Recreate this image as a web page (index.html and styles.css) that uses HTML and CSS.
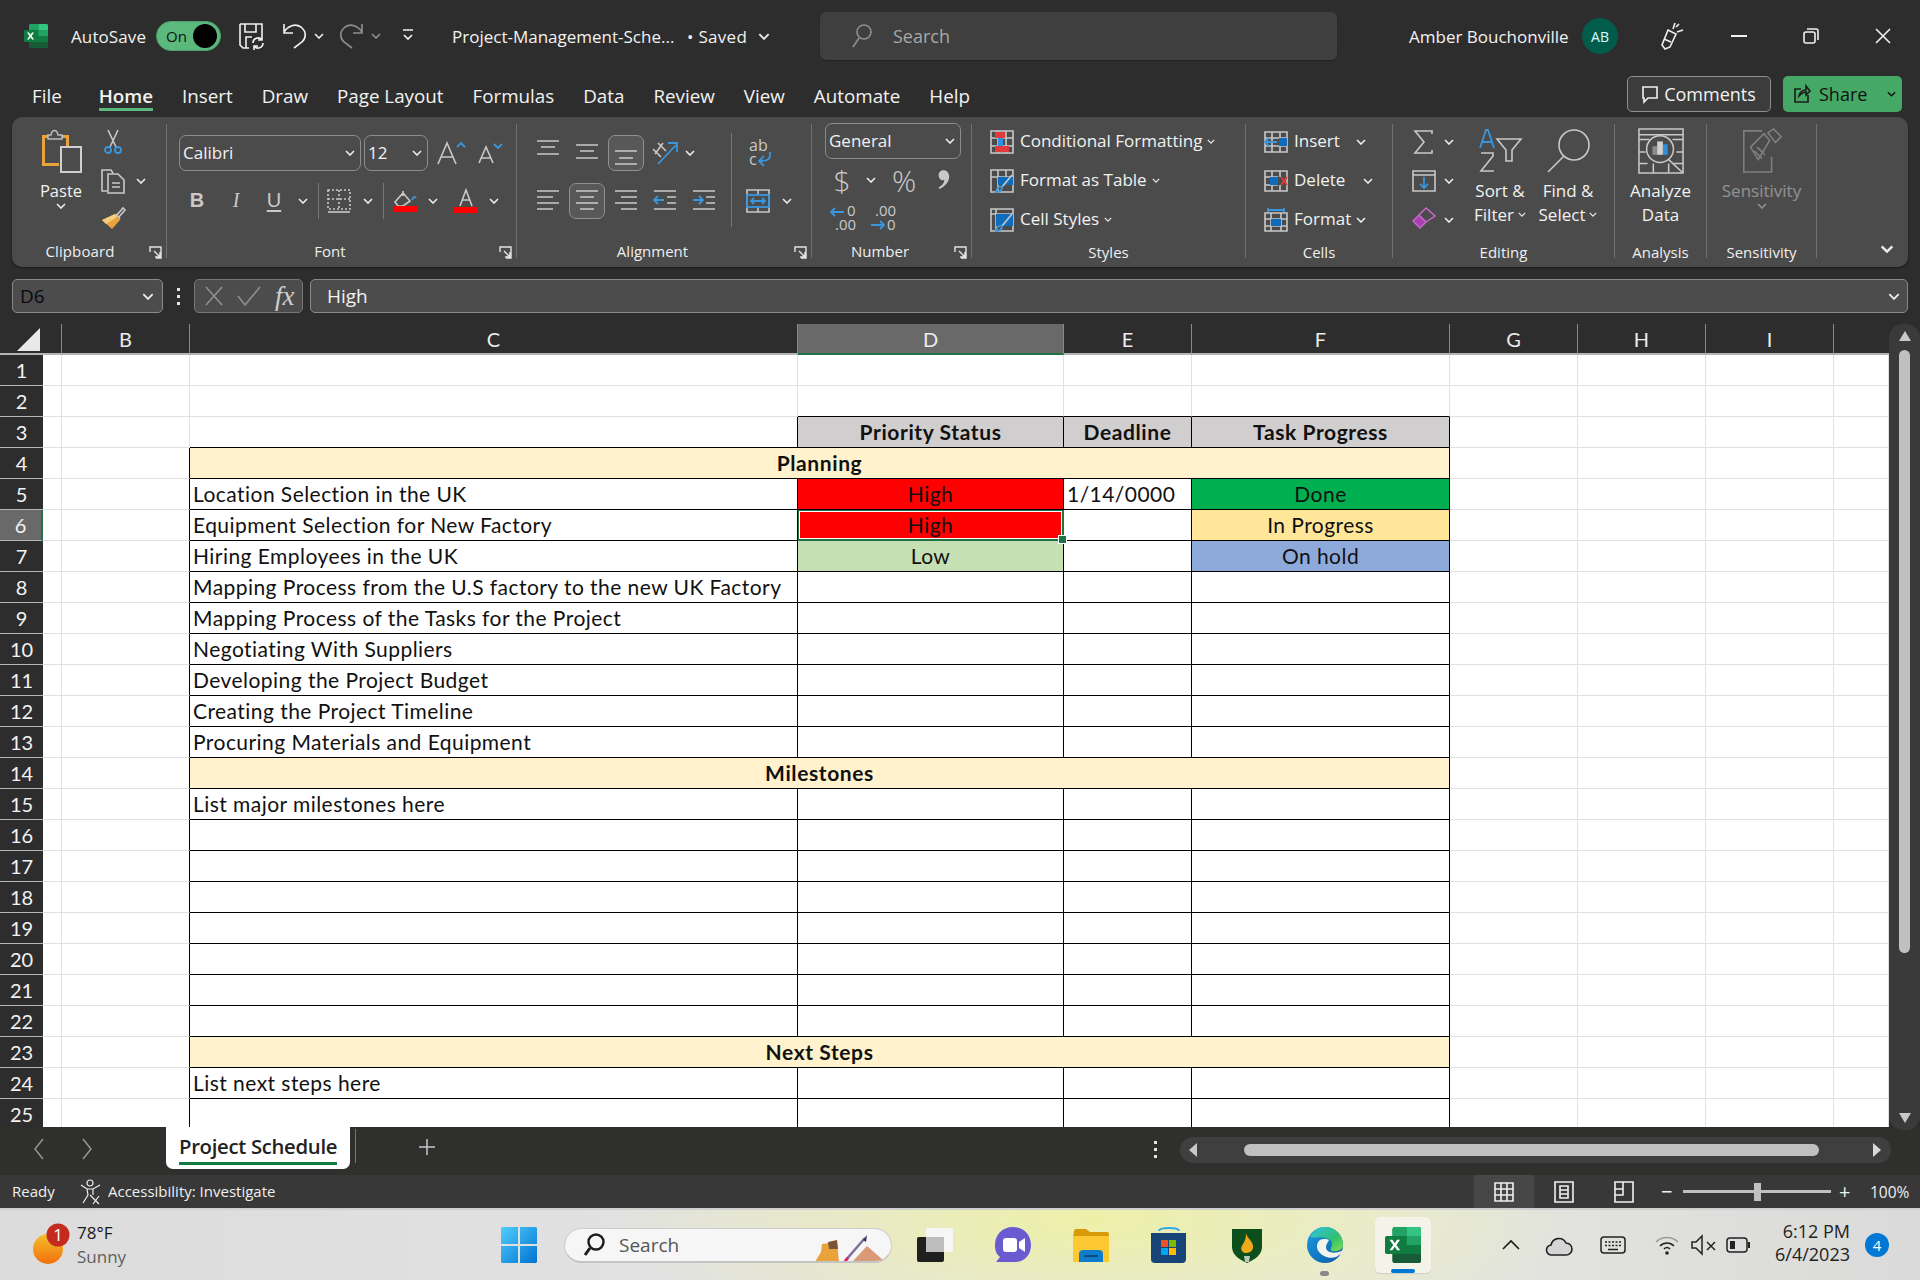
FILE: index.html
```html
<!DOCTYPE html>
<html lang="en">
<head>
<meta charset="utf-8">
<title>Project-Management-Schedule - Excel</title>
<link rel="stylesheet" href="styles.css">
</head>
<body>
<svg class="defs" width="0" height="0" aria-hidden="true">
  <defs>
    <symbol id="ch" viewBox="0 0 10 6"><path d="M1 1l4 4 4-4"/></symbol>
    <symbol id="xl" viewBox="0 0 24 24">
      <rect x="5" width="19" height="24" rx="1.5" fill="#107c41"/>
      <path d="M5 1.5A1.5 1.5 0 0 1 6.500 0H14.500V6H5Z" fill="#21a366"/>
      <path d="M14.500 0H22.500A1.500 1.500 0 0 1 24 1.500V6H14.500Z" fill="#33c481"/>
      <rect x="14.500" y="6" width="9.500" height="6" fill="#21a366"/>
      <path d="M5 18H24V22.500A1.500 1.500 0 0 1 22.500 24H6.500A1.500 1.500 0 0 1 5 22.500Z" fill="#185c37"/>
      <rect y="6" width="13" height="12" rx="1.200" fill="#107c41"/>
      <path d="M3 8.500h2l1.500 2.300L8 8.500h2l-2.400 3.500 2.500 3.500H8.100L6.500 13.200 4.900 15.500H3l2.500-3.500Z" fill="#fff"/>
    </symbol>
  </defs>
</svg>

<div class="app">
  <header class="titlebar">
    <div class="t-left">
      <svg class="xl-logo" width="24" height="24"><use href="#xl"/></svg>
      <span class="autosave">AutoSave</span>
      <span class="toggle"><span class="toggle-on">On</span><span class="toggle-dot"></span></span>
      <svg class="t-save ic-w" width="26" height="26" viewBox="0 0 26 26"><path d="M1 1H23V13M1 1V22L4 25H10M6 1V9H17V1M7 25V14H13"/><path d="M14 20a5 5 0 0 1 9-3M24 20a5 5 0 0 1-9 3M23 13v4h-4M15 27v-4h4"/></svg>
      <svg class="t-undo ic-w" width="24" height="26" viewBox="0 0 24 26"><path d="M1 1V10H10M1 9C5 3 12 0 18 4 24 9 23 15 19 19L11 25"/></svg>
      <svg class="chev t-uc" width="10" height="6"><use href="#ch"/></svg>
      <svg class="t-redo ic-g" width="24" height="26" viewBox="0 0 24 26"><path d="M23 1V10H14M23 9C19 3 12 0 6 4 0 9 1 15 5 19L13 25"/></svg>
      <svg class="chev dim t-rc" width="10" height="6"><use href="#ch"/></svg>
      <svg class="t-cust ic-w" width="12" height="14" viewBox="0 0 12 14"><path d="M1 1H11M2 6L6 10 10 6"/></svg>
      <span class="doc-name">Project-Management-Sche...</span>
      <span class="doc-state">• Saved</span>
      <svg class="chev t-dc" width="12" height="7"><use href="#ch"/></svg>
    </div>
    <div class="searchbox">
      <svg class="ic-g" width="22" height="26" viewBox="0 0 22 26"><circle cx="13" cy="9" r="7"/><path d="M8 15L2 24"/></svg>
      <span>Search</span>
    </div>
    <div class="t-right">
      <span class="user">Amber Bouchonville</span>
      <span class="avatar">AB</span>
      <svg class="t-pen ic-w" width="26" height="28" viewBox="0 0 26 28"><path d="M10 8L18 12 12 25 7 27 4 23ZM6 17L13 20M15 7l2-6M19 10l6-2M18 5l3-3"/></svg>
      <span class="t-min"></span>
      <svg class="t-rest ic-w" width="16" height="16" viewBox="0 0 16 16"><rect x="1" y="4" width="11" height="11" rx="2"/><path d="M4 1H13A2 2 0 0 1 15 3V12"/></svg>
      <svg class="t-close ic-w" width="16" height="16" viewBox="0 0 16 16"><path d="M1 1L15 15M15 1L1 15"/></svg>
    </div>
  </header>

  <nav class="tabrow">
    <div class="tabs">
      <span>File</span><span class="active">Home</span><span>Insert</span><span>Draw</span><span>Page Layout</span><span>Formulas</span><span>Data</span><span>Review</span><span>View</span><span>Automate</span><span>Help</span>
    </div>
    <div class="tab-actions">
      <span class="btn-comments"><svg class="ic-w" width="16" height="17" viewBox="0 0 16 17"><path d="M1 1H15V12H6L2 16V12H1Z"/></svg>Comments</span>
      <span class="btn-share"><svg class="ic-d" width="17" height="18" viewBox="0 0 17 18"><path d="M7 4H1V17H14V10M5 11C6 7 9 5 12 5V1L16 6 12 10V7C9 7 7 9 5 11Z"/></svg>Share<svg class="chev dark sh-c" width="9" height="6"><use href="#ch"/></svg></span>
    </div>
  </nav>

  <section class="ribbon">
    <!-- Clipboard -->
    <div class="g g-clip">
      <div class="body clip">
        <div class="big w84">
          <svg class="bigic" width="44" height="46" viewBox="0 0 44 46"><path d="M17 7H3V38H20V35H6V10H17Z" fill="#e8a33d"/><path d="M23 7H30V18H27V10H23Z" fill="#e8a33d"/><rect x="22" y="19" width="20" height="25" fill="none" stroke="#cfcfcf" stroke-width="2"/><path d="M9 7H12C13 1 18 1 19 7H23V11H9Z" fill="#4c4c4c" stroke="#bdbdbd" stroke-width="1.500"/></svg>
          <span class="bt">Paste</span>
          <svg class="chev" width="10" height="6"><use href="#ch"/></svg>
        </div>
        <div class="col39">
          <div class="r39"><span class="cell w20"><svg width="18" height="26" viewBox="0 0 18 26"><path class="s" d="M4 1L12 18M14 1L6 18"/><circle class="b" cx="4" cy="21" r="3"/><circle class="b" cx="14" cy="21" r="3"/></svg></span></div>
          <div class="r39"><span class="cell w20"><svg width="26" height="26" viewBox="0 0 26 26"><path class="s" d="M7 23H2V2H11L13 5M8 6H18L24 12V25H8ZM12 15H20M12 19H20"/></svg></span><span class="cell w36"><svg class="chev" width="10" height="6"><use href="#ch"/></svg></span></div>
          <div class="r39"><span class="cell w20"><svg width="26" height="24" viewBox="0 0 26 24"><path class="s" d="M16 10L23 2 25 4 18 12M16 8L20 13"/><path d="M2 14L15 8 20 14 12 23Z" fill="#e8a33d"/><path d="M2 14L15 8 17 11 6 18Z" fill="#f4ce7e"/></svg></span></div>
        </div>
      </div>
      <div class="lbl"><span>Clipboard</span><i class="launch"><svg width="13" height="13" viewBox="0 0 13 13"><path d="M1 6V1H12V12H7M5 5L11 11M11 6V11H6"/></svg></i></div>
    </div>

    <!-- Font -->
    <div class="g g-font">
      <div class="body stack">
        <div class="row36">
          <span class="sel-box w182">Calibri<svg class="chev" width="10" height="6"><use href="#ch"/></svg></span>
          <span class="sel-box w64 ml3">12<svg class="chev" width="10" height="6"><use href="#ch"/></svg></span>
          <span class="cell w36 ml5"><svg width="30" height="24" viewBox="0 0 30 24"><path class="s" d="M2 23L11 2 20 23M5 16H17"/><path class="b" d="M21 6L25 2 29 6"/></svg></span>
          <span class="cell w36 ml3"><svg width="26" height="22" viewBox="0 0 26 22"><path class="s" d="M2 21L9 5 16 21M4 16H14"/><path class="b" d="M17 2L21 6 25 2"/></svg></span>
        </div>
        <div class="row36">
          <span class="cell w36 fmt bold">B</span>
          <span class="cell w42 fmt ital">I</span>
          <span class="cell w34 fmt under">U</span>
          <span class="cell w24"><svg class="chev" width="10" height="6"><use href="#ch"/></svg></span>
          <span class="vsep w6"></span>
          <span class="cell w36"><svg width="24" height="24" viewBox="0 0 24 24"><path class="s dot" d="M1 1H23V20H1ZM12 1V20M1 10H23"/><path class="s" d="M1 23H23"/></svg></span>
          <span class="cell w22"><svg class="chev" width="10" height="6"><use href="#ch"/></svg></span>
          <span class="vsep w8"></span>
          <span class="cell w36 colcell"><svg width="24" height="22" viewBox="0 0 24 22"><path class="s" d="M2 12L10 3 17 11 10 16H5ZM10 1V6"/><path class="b" d="M19 10C20 7 22 6 23 8"/><rect x="0" y="16" width="24" height="6" fill="#f00"/></svg></span>
          <span class="cell w20"><svg class="chev" width="10" height="6"><use href="#ch"/></svg></span>
          <span class="cell w36 ml5 colcell"><svg width="24" height="24" viewBox="0 0 24 24"><path class="s" d="M6 17L12 1 18 17M8 11H16"/><rect x="0" y="18" width="24" height="6" fill="#f00"/></svg></span>
          <span class="cell w20"><svg class="chev" width="10" height="6"><use href="#ch"/></svg></span>
        </div>
      </div>
      <div class="lbl"><span>Font</span><i class="launch"><svg width="13" height="13" viewBox="0 0 13 13"><path d="M1 6V1H12V12H7M5 5L11 11M11 6V11H6"/></svg></i></div>
    </div>

    <!-- Alignment -->
    <div class="g g-align">
      <div class="body alignb">
        <div class="stack w203">
          <div class="row36">
            <span class="cell w39"><svg width="24" height="36" viewBox="0 0 24 36"><path class="s" d="M1 6H23M5 12H19M1 19H23"/></svg></span>
            <span class="cell w39"><svg width="24" height="36" viewBox="0 0 24 36"><path class="s" d="M1 10H23M5 16H19M1 23H23"/></svg></span>
            <span class="cell w39"><span class="on"><svg width="24" height="34" viewBox="0 0 24 34"><path class="s" d="M1 15H23M5 22H19M1 28H23"/></svg></span></span>
            <span class="cell w39"><svg width="26" height="26" viewBox="0 0 26 26"><path class="b" d="M6 24L24 5M16 3H25V12"/><path class="s" d="M3 14L11 3M6 3L14 11M1 9L9 17"/></svg></span>
            <span class="cell w12"><svg class="chev" width="10" height="6"><use href="#ch"/></svg></span>
          </div>
          <div class="row36">
            <span class="cell w39"><svg width="24" height="36" viewBox="0 0 24 36"><path class="s" d="M1 8H23M1 14H17M1 20H23M1 26H17"/></svg></span>
            <span class="cell w39"><span class="on"><svg width="24" height="34" viewBox="0 0 24 34"><path class="s" d="M1 7H23M5 13H19M1 19H23M5 25H19"/></svg></span></span>
            <span class="cell w39"><svg width="24" height="36" viewBox="0 0 24 36"><path class="s" d="M1 8H23M7 14H23M1 20H23M7 26H23"/></svg></span>
            <span class="cell w39"><svg width="24" height="36" viewBox="0 0 24 36"><path class="s" d="M1 8H23M14 14H23M14 20H23M1 26H23"/><path class="b" d="M11 17H1M5 13L1 17 5 21"/></svg></span>
            <span class="cell w39"><svg width="24" height="36" viewBox="0 0 24 36"><path class="s" d="M1 8H23M14 14H23M14 20H23M1 26H23"/><path class="b" d="M1 17H11M7 13L11 17 7 21"/></svg></span>
          </div>
        </div>
        <span class="vsep tall"></span>
        <div class="stack">
          <div class="row36"><span class="cell w58"><svg width="24" height="30" viewBox="0 0 24 30"><text class="glyph lg" x="0" y="13">ab</text><text class="glyph lg" x="0" y="27">c</text><path class="b" d="M21 14V18C21 22 17 23 11 23M15 18L10 23 15 28"/></svg></span></div>
          <div class="row36"><span class="cell w52"><svg width="24" height="24" viewBox="0 0 24 24"><path class="s" d="M1 1H23V23H1ZM12 1V5M12 19V23"/><rect class="b" x="1" y="6" width="22" height="12"/><path class="b" d="M5 12H19M8 9L5 12 8 15M16 9L19 12 16 15"/></svg></span><span class="cell w6"><svg class="chev" width="10" height="6"><use href="#ch"/></svg></span></div>
        </div>
      </div>
      <div class="lbl"><span>Alignment</span><i class="launch"><svg width="13" height="13" viewBox="0 0 13 13"><path d="M1 6V1H12V12H7M5 5L11 11M11 6V11H6"/></svg></i></div>
    </div>

    <!-- Number -->
    <div class="g g-num">
      <div class="body num">
        <span class="sel-box w136">General<svg class="chev" width="10" height="6"><use href="#ch"/></svg></span>
        <div class="row36 mt3">
          <span class="cell w34 sym">$</span>
          <span class="cell w24"><svg class="chev" width="10" height="6"><use href="#ch"/></svg></span>
          <span class="cell w42 sym">%</span>
          <span class="cell w36"><svg width="13" height="22" viewBox="0 0 16 26"><path d="M8 1C12 1 15 4 15 9 15 15 10 21 3 24L2 22C6 20 9 17 9 13 5 14 2 11 2 7 2 3 5 1 8 1Z" fill="#c9c9c9"/></svg></span>
        </div>
        <div class="row36 mt2">
          <span class="cell w36"><svg width="28" height="28" viewBox="0 0 28 28"><path class="b" d="M15 8H2M6 4L2 8 6 12"/><text class="glyph" x="18" y="12">0</text><text class="glyph" x="6" y="26">.00</text></svg></span>
          <span class="cell w44"><svg width="28" height="28" viewBox="0 0 28 28"><text class="glyph" x="6" y="12">.00</text><path class="b" d="M2 21H15M11 17L15 21 11 25"/><text class="glyph" x="18" y="26">0</text></svg></span>
        </div>
      </div>
      <div class="lbl"><span>Number</span><i class="launch"><svg width="13" height="13" viewBox="0 0 13 13"><path d="M1 6V1H12V12H7M5 5L11 11M11 6V11H6"/></svg></i></div>
    </div>

    <!-- Styles -->
    <div class="g g-styles">
      <div class="body listb">
        <div class="r39 txt"><svg width="24" height="24" viewBox="0 0 24 24"><path class="s" d="M1 1H23V23H1ZM1 8H23M1 16H23M8 1V23M16 1V23"/><path d="M5 2H15V8H5ZM5 16H19V22H5Z" fill="#e03a3a"/><rect x="8" y="8" width="5" height="8" fill="#2f8fe0"/></svg><span>Conditional Formatting</span><svg class="chev small" width="8" height="5"><use href="#ch"/></svg></div>
        <div class="r39 txt"><svg width="24" height="24" viewBox="0 0 24 24"><path class="s" d="M1 1H23V23H1ZM1 8H23M8 1V23M16 1V8"/><rect x="8" y="8" width="15" height="8" fill="#0f6cbd"/><path class="s" d="M22 6L12 18"/><path class="b" d="M6 23C7 18 10 17 12 18 12 21 10 23 6 23Z"/></svg><span>Format as Table</span><svg class="chev small" width="8" height="5"><use href="#ch"/></svg></div>
        <div class="r39 txt"><svg width="24" height="24" viewBox="0 0 24 24"><path class="s" d="M1 1H23V23H1ZM1 6H23M6 1V23"/><rect x="6" y="6" width="17" height="12" fill="#0f6cbd"/><path class="s" d="M22 6L12 18"/><path class="b" d="M6 23C7 18 10 17 12 18 12 21 10 23 6 23Z"/></svg><span>Cell Styles</span><svg class="chev small" width="8" height="5"><use href="#ch"/></svg></div>
      </div>
      <div class="lbl plain"><span>Styles</span></div>
    </div>

    <!-- Cells -->
    <div class="g g-cells">
      <div class="body listb">
        <div class="r39 txt"><svg width="24" height="22" viewBox="0 0 24 22"><path class="s" d="M1 1H23V21H1ZM1 7H23M1 15H23M8 1V21M16 1V21"/><rect x="15" y="7" width="8" height="8" fill="#0f6cbd"/><path class="b" d="M13 11H1M5 7L1 11 5 15"/></svg><span class="cw">Insert</span><svg class="chev" width="10" height="6"><use href="#ch"/></svg></div>
        <div class="r39 txt"><svg width="24" height="22" viewBox="0 0 24 22"><path class="s" d="M1 1H23V21H1ZM1 7H14M1 15H14M8 1V21M16 1V7M16 15V21"/><rect x="6" y="7" width="8" height="8" fill="#0f6cbd"/><path class="rd" d="M17 7L23 15M23 7L17 15"/></svg><span class="cw cw2">Delete</span><svg class="chev" width="10" height="6"><use href="#ch"/></svg></div>
        <div class="r39 txt"><svg width="24" height="24" viewBox="0 0 24 24"><path class="s" d="M1 5H23V23H1ZM1 11H23M1 18H23M7 5V23M17 5V23"/><rect x="7" y="11" width="10" height="7" fill="#0f6cbd"/><path class="b" d="M4 2H20M4 0V4M20 0V4"/></svg><span class="cw">Format</span><svg class="chev" width="10" height="6"><use href="#ch"/></svg></div>
      </div>
      <div class="lbl plain"><span>Cells</span></div>
    </div>

    <!-- Editing -->
    <div class="g g-edit">
      <div class="body editb">
        <div class="col39">
          <div class="r39"><span class="cell w20"><svg width="20" height="24" viewBox="0 0 20 24"><path class="s" d="M18 4V1H1L10 12 1 23H18V20"/></svg></span><span class="cell w30"><svg class="chev" width="10" height="6"><use href="#ch"/></svg></span></div>
          <div class="r39"><span class="cell w20"><svg width="24" height="22" viewBox="0 0 24 22"><path class="s" d="M1 1H23V21H1ZM1 5H23"/><path class="b" d="M12 7V18M8 14L12 18 16 14"/></svg></span><span class="cell w30"><svg class="chev" width="10" height="6"><use href="#ch"/></svg></span></div>
          <div class="r39"><span class="cell w20"><svg width="24" height="24" viewBox="0 0 24 24"><path d="M1 15L8 22 14 16 7 9Z" fill="#a83fb0" stroke="#c768cc" stroke-width="1.500"/><path d="M7 9L14 2 23 10 14 16" fill="none" stroke="#c768cc" stroke-width="1.500"/></svg></span><span class="cell w30"><svg class="chev" width="10" height="6"><use href="#ch"/></svg></span></div>
        </div>
        <div class="big w68">
          <svg class="bigic" width="44" height="46" viewBox="0 0 44 46"><path class="b" d="M2 20L8 2H10L16 20M4 14H14"/><path class="s" d="M3 25H15V28L3 43H16M19 11H43L34 22V33H28V22Z"/></svg>
          <span class="bt">Sort &amp;</span>
          <span class="bt">Filter<svg class="chev small ml4" width="8" height="5"><use href="#ch"/></svg></span>
        </div>
        <div class="big w68">
          <svg class="bigic" width="44" height="46" viewBox="0 0 44 46"><circle class="s" cx="28" cy="17" r="15"/><path class="s" d="M18 28L2 44"/></svg>
          <span class="bt">Find &amp;</span>
          <span class="bt">Select<svg class="chev small ml4" width="8" height="5"><use href="#ch"/></svg></span>
        </div>
      </div>
      <div class="lbl plain"><span>Editing</span></div>
    </div>

    <!-- Analysis -->
    <div class="g g-ana">
      <div class="body editb">
        <div class="big wfull">
          <svg class="bigic" width="48" height="48" viewBox="0 0 48 48"><path class="s" d="M1 1H47V47H1ZM1 7H47M1 12H12M36 12H47M1 25H8M40 25H47M1 37H10M37 37H47M16 37V47M32 37V47"/><circle class="s" cx="23" cy="22" r="14"/><path class="s" d="M32 33L47 47"/><rect x="15" y="19" width="5" height="9" fill="#8a8a8a"/><rect x="20" y="14" width="6" height="14" fill="#d0d0d0"/><rect x="26" y="17" width="5" height="11" fill="#2f8fe0"/></svg>
          <span class="bt">Analyze</span>
          <span class="bt">Data</span>
        </div>
      </div>
      <div class="lbl plain"><span>Analysis</span></div>
    </div>

    <!-- Sensitivity -->
    <div class="g g-sens">
      <div class="body editb">
        <div class="big wfull disabled">
          <svg class="bigic" width="44" height="48" viewBox="0 0 44 48"><path class="s" d="M22 3H3V46H32V30"/><path class="s" d="M10 20L24 6 30 13 18 33Z M28 5L34 1 42 9 36 15Z M14 24L22 32M17 20L25 28"/></svg>
          <span class="bt">Sensitivity</span>
          <svg class="chev" width="10" height="6"><use href="#ch"/></svg>
        </div>
      </div>
      <div class="lbl plain"><span>Sensitivity</span></div>
    </div>

    <div class="collapse"><svg class="chev big-ch" width="14" height="8"><use href="#ch"/></svg></div>
  </section>

  <section class="fbar">
    <div class="namebox"><span>D6</span><svg class="chev" width="12" height="7"><use href="#ch"/></svg></div>
    <span class="fdots"><i></i><i></i><i></i></span>
    <div class="fxbox">
      <svg class="ic-g" width="18" height="20" viewBox="0 0 18 20"><path d="M1 1L17 19M17 1L1 19"/></svg>
      <svg class="ic-g" width="24" height="20" viewBox="0 0 24 20"><path d="M1 10L8 19 23 1"/></svg>
      <span class="fx">fx</span>
    </div>
    <div class="fbox"><span>High</span><svg class="chev" width="12" height="7"><use href="#ch"/></svg></div>
  </section>

  <section class="sheet">
    <div class="gridwrap">
      <table class="grid">
        <colgroup><col class="c-h"><col class="c-a"><col class="c-b"><col class="c-c"><col class="c-d"><col class="c-e"><col class="c-f"><col class="c-g"><col class="c-g"><col class="c-g"><col></colgroup>
        <thead>
          <tr><th class="corner"><svg width="23" height="23" viewBox="0 0 23 23"><path d="M0 23L23 0V23Z" fill="#e9e9e9"/></svg></th><th></th><th>B</th><th>C</th><th class="hsel">D</th><th>E</th><th>F</th><th>G</th><th>H</th><th>I</th><th></th></tr>
        </thead>
        <tbody>
          <tr><th>1</th><td></td><td></td><td></td><td></td><td></td><td></td><td></td><td></td><td></td><td></td></tr>
          <tr><th>2</th><td></td><td></td><td></td><td class="bb"></td><td class="bb"></td><td class="bb"></td><td></td><td></td><td></td><td></td></tr>
          <tr><th>3</th><td></td><td></td><td class="bb br"></td><td class="x gr hd">Priority Status</td><td class="x gr hd">Deadline</td><td class="x gr hd">Task Progress</td><td></td><td></td><td></td><td></td></tr>
          <tr><th>4</th><td></td><td class="br"></td><td class="x yl hd" colspan="4">Planning</td><td></td><td></td><td></td><td></td></tr>
          <tr><th>5</th><td></td><td class="br"></td><td class="x">Location Selection in the UK</td><td class="x red ctr">High</td><td class="x">1/14/0000</td><td class="x dn ctr">Done</td><td></td><td></td><td></td><td></td></tr>
          <tr><th class="rsel">6</th><td></td><td class="br"></td><td class="x">Equipment Selection for New Factory</td><td class="x red ctr cur">High</td><td class="x"></td><td class="x ip ctr">In Progress</td><td></td><td></td><td></td><td></td></tr>
          <tr><th>7</th><td></td><td class="br"></td><td class="x">Hiring Employees in the UK</td><td class="x lo ctr">Low</td><td class="x"></td><td class="x oh ctr">On hold</td><td></td><td></td><td></td><td></td></tr>
          <tr><th>8</th><td></td><td class="br"></td><td class="x">Mapping Process from the U.S factory to the new UK Factory</td><td class="x"></td><td class="x"></td><td class="x"></td><td></td><td></td><td></td><td></td></tr>
          <tr><th>9</th><td></td><td class="br"></td><td class="x">Mapping Process of the Tasks for the Project</td><td class="x"></td><td class="x"></td><td class="x"></td><td></td><td></td><td></td><td></td></tr>
          <tr><th>10</th><td></td><td class="br"></td><td class="x">Negotiating With Suppliers</td><td class="x"></td><td class="x"></td><td class="x"></td><td></td><td></td><td></td><td></td></tr>
          <tr><th>11</th><td></td><td class="br"></td><td class="x">Developing the Project Budget</td><td class="x"></td><td class="x"></td><td class="x"></td><td></td><td></td><td></td><td></td></tr>
          <tr><th>12</th><td></td><td class="br"></td><td class="x">Creating the Project Timeline</td><td class="x"></td><td class="x"></td><td class="x"></td><td></td><td></td><td></td><td></td></tr>
          <tr><th>13</th><td></td><td class="br"></td><td class="x">Procuring Materials and Equipment</td><td class="x"></td><td class="x"></td><td class="x"></td><td></td><td></td><td></td><td></td></tr>
          <tr><th>14</th><td></td><td class="br"></td><td class="x yl hd" colspan="4">Milestones</td><td></td><td></td><td></td><td></td></tr>
          <tr><th>15</th><td></td><td class="br"></td><td class="x">List major milestones here</td><td class="x"></td><td class="x"></td><td class="x"></td><td></td><td></td><td></td><td></td></tr>
          <tr><th>16</th><td></td><td class="br"></td><td class="x"></td><td class="x"></td><td class="x"></td><td class="x"></td><td></td><td></td><td></td><td></td></tr>
          <tr><th>17</th><td></td><td class="br"></td><td class="x"></td><td class="x"></td><td class="x"></td><td class="x"></td><td></td><td></td><td></td><td></td></tr>
          <tr><th>18</th><td></td><td class="br"></td><td class="x"></td><td class="x"></td><td class="x"></td><td class="x"></td><td></td><td></td><td></td><td></td></tr>
          <tr><th>19</th><td></td><td class="br"></td><td class="x"></td><td class="x"></td><td class="x"></td><td class="x"></td><td></td><td></td><td></td><td></td></tr>
          <tr><th>20</th><td></td><td class="br"></td><td class="x"></td><td class="x"></td><td class="x"></td><td class="x"></td><td></td><td></td><td></td><td></td></tr>
          <tr><th>21</th><td></td><td class="br"></td><td class="x"></td><td class="x"></td><td class="x"></td><td class="x"></td><td></td><td></td><td></td><td></td></tr>
          <tr><th>22</th><td></td><td class="br"></td><td class="x"></td><td class="x"></td><td class="x"></td><td class="x"></td><td></td><td></td><td></td><td></td></tr>
          <tr><th>23</th><td></td><td class="br"></td><td class="x yl hd" colspan="4">Next Steps</td><td></td><td></td><td></td><td></td></tr>
          <tr><th>24</th><td></td><td class="br"></td><td class="x">List next steps here</td><td class="x"></td><td class="x"></td><td class="x"></td><td></td><td></td><td></td><td></td></tr>
          <tr><th>25</th><td></td><td class="br"></td><td class="x"></td><td class="x"></td><td class="x"></td><td class="x"></td><td></td><td></td><td></td><td></td></tr>
        </tbody>
      </table>
    </div>
    <div class="vscroll">
      <svg width="14" height="12" viewBox="0 0 14 12"><path d="M7 1L13 11H1Z" fill="#c8c8c8"/></svg>
      <span class="vthumb"></span>
      <svg width="14" height="12" viewBox="0 0 14 12"><path d="M7 11L13 1H1Z" fill="#c8c8c8"/></svg>
    </div>
  </section>

  <section class="sheetbar">
    <svg class="nav-l" width="10" height="22" viewBox="0 0 10 22"><path d="M9 1L1 11 9 21"/></svg>
    <svg class="nav-r" width="10" height="22" viewBox="0 0 10 22"><path d="M1 1L9 11 1 21"/></svg>
    <div class="sheettab"><span>Project Schedule</span></div>
    <span class="tabsep"></span>
    <svg class="plus" width="18" height="18" viewBox="0 0 18 18"><path d="M9 1V17M1 9H17"/></svg>
    <span class="sdots"><i></i><i></i><i></i></span>
    <div class="hscroll">
      <svg width="10" height="14" viewBox="0 0 10 14"><path d="M9 0V14L1 7Z" fill="#c8c8c8"/></svg>
      <span class="hthumb"></span>
      <svg width="10" height="14" viewBox="0 0 10 14"><path d="M1 0V14L9 7Z" fill="#d8d8d8"/></svg>
    </div>
  </section>

  <footer class="status">
    <span class="ready">Ready</span>
    <svg class="acc ic-w thin" width="22" height="26" viewBox="0 0 22 26"><circle cx="10" cy="4" r="3"/><path d="M1 6L7 10H13L20 6M7 10L8 16M13 10L13 16M8 16L3 24M10 16L19 25M13 25L19 17"/></svg>
    <span class="acc-t">Accessibility: Investigate</span>
    <div class="views">
      <span class="v-cell v-on"><svg class="ic-w" width="20" height="20" viewBox="0 0 20 20"><path d="M1 1H19V19H1ZM1 7H19M1 13H19M7 1V19M13 1V19"/></svg></span>
      <span class="v-cell"><svg class="ic-w" width="20" height="22" viewBox="0 0 20 22"><path d="M1 1H19V21H1ZM6 5H14V17H6ZM6 9H14M6 13H14"/></svg></span>
      <span class="v-cell"><svg class="ic-w" width="20" height="22" viewBox="0 0 20 22"><path d="M1 1H19V21H1ZM1 14H9V1M9 8H1"/></svg></span>
    </div>
    <span class="zm">−</span>
    <span class="slider"><i></i></span>
    <span class="zp">+</span>
    <span class="zoom">100%</span>
  </footer>

  <div class="taskbar">
    <div class="weather">
      <span class="sun"><svg width="38" height="44" viewBox="0 0 38 44"><defs><linearGradient id="sg" x1="0" y1="0" x2="0" y2="1"><stop offset="0" stop-color="#f4c02a"/><stop offset="1" stop-color="#f26f0c"/></linearGradient></defs><circle cx="15" cy="26" r="15" fill="url(#sg)"/><circle cx="25" cy="12" r="11.500" fill="#c42b1c"/><text class="sun-n" x="25" y="18" text-anchor="middle">1</text></svg></span>
      <div class="w-text"><span class="w-t">78°F</span><span class="w-s">Sunny</span></div>
    </div>
    <svg class="start" width="36" height="36" viewBox="0 0 36 36"><defs><linearGradient id="st" x1="0" y1="0" x2="1" y2="1"><stop offset="0" stop-color="#52cdfc"/><stop offset="1" stop-color="#0072d0"/></linearGradient></defs><path d="M1 0H17V17H0V1ZM19 0H35L36 1V17H19ZM0 19H17V36H1L0 35ZM19 19H36V35L35 36H19Z" fill="url(#st)"/></svg>
    <div class="pill">
      <svg class="mag" width="22" height="24" viewBox="0 0 22 24"><circle cx="13" cy="9" r="7.500" fill="none" stroke="#1c1c1c" stroke-width="2.400"/><path d="M7 15L2 22" stroke="#1c1c1c" stroke-width="3"/></svg>
      <span>Search</span>
      <svg class="decor" width="72" height="28" viewBox="0 0 72 28"><path d="M2 28L8 18 9 10 24 8 26 28Z" fill="#e8a33d"/><path d="M15 8L24 6 25 15 16 15Z" fill="#7a5538"/><path d="M32 27L52 4" stroke="#7e6f9e" stroke-width="2.500"/><path d="M30 28L34 23 36 25 33 28Z" fill="#e8175d"/><path d="M50 6L54 1 53 8Z" fill="#3b2f5c"/><path d="M40 27L54 12 70 26V28H40Z" fill="#d99a75"/></svg>
    </div>
    <div class="apps">
      <span class="app-c"><svg width="36" height="34" viewBox="0 0 36 34"><rect x="0" y="9" width="27" height="25" rx="2" fill="#1f1f1f"/><rect x="9" y="0" width="27" height="24" rx="2" fill="#f6f6f6"/><rect x="9" y="9" width="18" height="15" fill="#bdbdbd"/></svg></span>
      <span class="app-c"><svg width="38" height="36" viewBox="0 0 38 36"><path d="M19 0C30 0 37 8 37 18S30 36 19 35H2L6 30C2 27 1 23 1 18 1 8 8 0 19 0Z" fill="#6a5bd0"/><rect x="9" y="11" width="14" height="14" rx="3" fill="#fff"/><path d="M25 15L31 11V25L25 21Z" fill="#fff"/></svg></span>
      <span class="app-c"><svg width="36" height="34" viewBox="0 0 36 34"><path d="M1 3A2 2 0 0 1 3 1H13L17 4H34A2 2 0 0 1 36 6V10H0Z" fill="#d99a0a"/><path d="M0 8H36V34H0Z" fill="#fdc832"/><path d="M6 34V26A4 4 0 0 1 10 22H26A4 4 0 0 1 30 26V34Z" fill="#0f7ccc"/><rect x="11" y="27" width="14" height="2" fill="#094f85"/></svg></span>
      <span class="app-c"><svg width="36" height="36" viewBox="0 0 36 36"><path d="M8 4C8 0 28 0 28 4" fill="none" stroke="#2fa9e8" stroke-width="2"/><path d="M0 6H35V32A4 4 0 0 1 31 36H4A4 4 0 0 1 0 32Z" fill="#164477"/><rect x="10" y="13" width="7" height="7" fill="#f25022"/><rect x="18" y="13" width="7" height="7" fill="#7fba00"/><rect x="10" y="21" width="7" height="7" fill="#00a4ef"/><rect x="18" y="21" width="7" height="7" fill="#ffb900"/></svg></span>
      <span class="app-c"><svg width="30" height="36" viewBox="0 0 30 36"><path d="M0 2H30V20C30 28 22 33 15 36 8 33 0 28 0 20Z" fill="#0c4e1c"/><path d="M14 6C15 12 22 14 21 21 20 25 17 26 13 26 9 25 8 21 11 17 13 14 14 11 14 6Z" fill="#f0a91a"/><path d="M12 29H18L17 35H13Z" fill="#b8c9b8"/></svg></span>
      <span class="app-c edgeapp"><svg width="36" height="36" viewBox="0 0 36 36"><defs><linearGradient id="eg" x1="0" y1="0" x2="1" y2="1"><stop offset="0" stop-color="#34c1e8"/><stop offset=".6" stop-color="#2fc26f"/><stop offset="1" stop-color="#84e04a"/></linearGradient><linearGradient id="eb" x1="0" y1="0" x2="1" y2="1"><stop offset="0" stop-color="#1b9de2"/><stop offset="1" stop-color="#0c59a4"/></linearGradient></defs><circle cx="18" cy="18" r="18" fill="url(#eb)"/><path d="M3 10C7 2 14 0 18 0 28 0 36 8 36 18 36 23 30 25 25 24 21 23 29 16 22 12 15 8 8 12 3 10Z" fill="url(#eg)"/><path d="M17 12C10 12 8 20 12 25 16 30 24 32 29 30 33 28 36 25 36 23 30 27 19 27 19 20 19 17 21 15 22 13 21 12 19 12 17 12Z" fill="#f2f3ee"/></svg></span>
      <span class="app-c xlapp"><svg width="36" height="36"><use href="#xl"/></svg></span>
    </div>
    <div class="tray">
      <svg class="tr-caret" width="18" height="10" viewBox="0 0 18 10"><path d="M1 9L9 1 17 9"/></svg>
      <svg class="tr-cloud" width="26" height="22" viewBox="0 0 26 22"><path d="M6 21A5 5 0 0 1 5 11 8 8 0 0 1 20 9 6 6 0 0 1 20 21Z" fill="#d5d5d5" stroke="#222" stroke-width="1.600"/></svg>
      <svg class="tr-kb" width="26" height="18" viewBox="0 0 26 18"><rect x="1" y="1" width="24" height="16" rx="3" fill="none" stroke="#222" stroke-width="1.500"/><path d="M5 6H21M5 9.500H21" stroke="#222" stroke-width="1.500" stroke-dasharray="2 1.500"/><path d="M8 13.500H18" stroke="#222" stroke-width="1.500"/></svg>
      <svg class="tr-wifi" width="24" height="20" viewBox="0 0 24 20"><path d="M1 7C7 1 17 1 23 7" fill="none" stroke="#999" stroke-width="1.600"/><path d="M5 11C9 7 15 7 19 11M9 14C11 12 13 12 15 14" fill="none" stroke="#222" stroke-width="1.600"/><circle cx="12" cy="18" r="1.800" fill="#222"/></svg>
      <svg class="tr-vol" width="26" height="22" viewBox="0 0 26 22"><path d="M1 8H5L11 2V20L5 14H1Z" fill="none" stroke="#222" stroke-width="1.500"/><path d="M16 8L24 16M24 8L16 16" stroke="#222" stroke-width="1.500"/></svg>
      <svg class="tr-bat" width="24" height="16" viewBox="0 0 24 16"><rect x="1" y="1" width="20" height="14" rx="3" fill="none" stroke="#222" stroke-width="1.500"/><rect x="4" y="4" width="5" height="8" fill="#222"/><rect x="22" y="5" width="2" height="6" fill="#222"/></svg>
      <div class="clock"><span>6:12 PM</span><span>6/4/2023</span></div>
      <span class="notif">4</span>
    </div>
  </div>
</div>
</body>
</html>
```
FILE: styles.css
```css
*{box-sizing:border-box}
html,body{margin:0;padding:0}
body{width:1920px;height:1280px;overflow:hidden;background:#2e2e2e;font-family:"Open Sans","Noto Sans",sans-serif;color:#f2f2f2}
.defs{position:absolute}
svg{display:block;flex:none;overflow:visible}
.app{display:flex;flex-direction:column;height:1280px;background:#2e2d2d}

.ic-w,.ic-g,.ic-d{fill:none;stroke-width:1.6}
.ic-w{stroke:#f0f0f0}
.ic-g{stroke:#8f8f8f}
.ic-d{stroke:#1b1b1b}
.thin{stroke-width:1.200}
.chev{fill:none;stroke:#ececec;stroke-width:1.600}
.chev.dim{stroke:#8f8f8f}
.chev.dark{stroke:#111}
.chev.small{stroke-width:1.500}

/* title bar */
.titlebar{display:flex;align-items:center;height:72px;flex:none}
.t-left{width:820px;display:flex;align-items:center;padding-left:24px;font-size:17px;flex:none}
.autosave{width:76px;margin-left:23px;white-space:nowrap;letter-spacing:.1px}
.toggle{display:flex;align-items:center;justify-content:space-between;width:65px;height:30px;margin-left:9px;padding:0 3px 0 9px;background:#5cb97e;border-radius:15px;border:1px solid #4ea06d;color:#111;font-size:15px}
.toggle-dot{width:24px;height:24px;border-radius:50%;background:#000}
.t-save{margin-left:18px}
.t-undo{margin-left:18px}
.t-uc{margin-left:7px}
.t-redo{margin-left:15px}
.t-rc{margin-left:8px}
.t-cust{margin-left:21px}
.doc-name{width:224px;margin-left:38px;white-space:nowrap}
.doc-state{width:62px;margin-left:11px;white-space:nowrap;letter-spacing:.3px}
.t-dc{margin-left:9px}
.searchbox{display:flex;align-items:center;gap:20px;width:517px;height:48px;padding-left:31px;background:#3f3f3f;border-radius:6px;color:#a8a8a8;font-size:18px;flex:none;box-shadow:0 1px 1px #222}
.t-right{flex:1;display:flex;align-items:center;padding-left:72px;font-size:17px}
.user{width:160px;white-space:nowrap}
.avatar{width:36px;height:36px;margin-left:13px;border-radius:50%;background:#025c4c;display:flex;align-items:center;justify-content:center;font-size:14px;color:#dff}
.t-pen{margin-left:40px}
.t-min{width:16px;height:2px;background:#f0f0f0;margin-left:47px}
.t-rest{margin-left:56px}
.t-close{margin-left:56px}

/* tabs */
.tabrow{display:flex;height:45px;flex:none;justify-content:space-between;align-items:flex-start}
.tabs{display:flex;gap:29px;padding:8px 0 0 32px;font-size:18.800px;line-height:32px}
.tabs span{white-space:nowrap}
.tabs .active{margin-left:8px;font-weight:600;border-bottom:3px solid #5cb97e;height:31px}
.tab-actions{display:flex;gap:12px;padding:4px 18px 0 0;font-size:18px}
.btn-comments{display:flex;align-items:center;justify-content:center;gap:6px;width:144px;height:36px;border:1px solid #8f8f8f;border-radius:5px;background:#3c3c3c}
.btn-share{display:flex;align-items:center;gap:8px;width:119px;height:36px;padding-left:11px;border-radius:5px;background:#45a865;color:#111}
.sh-c{margin-left:12px}

/* ribbon */
.ribbon{display:flex;flex:none;height:150px;margin:0 12px;padding:7px 0 9px;background:#4b4b4b;border-radius:10px;box-shadow:0 1px 2px #1b1b1b;font-size:17px}
.g{display:flex;flex-direction:column;height:134px;flex:none;border-right:1px solid #707070}
.g-clip{width:155px}
.g-font{width:350px}
.g-align{width:295px}
.g-num{width:160px}
.g-styles{width:274px}
.g-cells{width:147px}
.g-edit{width:222px}
.g-ana{width:92px}
.g-sens{width:110px}
.body{flex:1;min-height:0;display:flex}
.lbl{display:flex;height:20px;margin-bottom:-4px;line-height:20px;font-size:15px;color:#efefef;flex:none}
.lbl span{flex:1;text-align:center;white-space:nowrap}
.lbl:not(.plain) span{padding-bottom:2px;line-height:18px}
.g-clip .lbl span{padding-left:5px;letter-spacing:.1px}
.launch{display:flex;width:24px;margin-right:-1px;align-items:center;justify-content:center}
.launch svg{fill:none;stroke:#e4e4e4;stroke-width:1.400}
.s{fill:none;stroke:#c9c9c9;stroke-width:1.600}
.b{fill:none;stroke:#3a96dd;stroke-width:1.800}
.rd{fill:none;stroke:#e03a3a;stroke-width:1.800}
.dot{stroke-dasharray:2 2}
.glyph{fill:#c9c9c9;font-family:"Open Sans",sans-serif;font-size:15px}
.glyph.lg{font-size:16px}
.cell{display:flex;align-items:center;justify-content:center;flex:none;height:36px}
.w6{width:6px}.w8{width:8px}.w12{width:12px}.w20{width:20px}.w22{width:22px}.w24{width:24px}.w30{width:30px}.w34{width:34px}.w36{width:36px}.w39{width:39px}.w42{width:42px}.w44{width:44px}.w52{width:52px}.w58{width:58px}.w64{width:64px}.w68{width:68px}.w84{width:84px}.w136{width:136px}.w182{width:182px}.w203{width:203px}
.wfull{width:100%}
.ml3{margin-left:3px}.ml4{margin-left:4px}.ml5{margin-left:5px}
.mt2{margin-top:2px}.mt3{margin-top:3px}

.big{display:flex;flex-direction:column;align-items:center;flex:none;padding-top:4px}
.bigic{box-sizing:content-box;height:46px;padding-bottom:5px}
.bt{display:flex;align-items:center;height:24px;padding-bottom:2px;white-space:nowrap}
.clip .bt{font-size:16.500px}
.col39{display:flex;flex-direction:column;margin-top:-2px;flex:none}
.r39{display:flex;align-items:center;height:39px;flex:none}
.r39 .cell{height:39px}
.col39 .r39:last-child .cell:first-child svg{margin-top:-3px}
.clip{padding-left:7px}
.stack{display:flex;flex-direction:column;gap:12px;padding-top:11px;flex:none}
.g .body.stack{flex:1}
.row36{display:flex;align-items:center;height:36px;flex:none}
.sel-box{display:flex;align-items:center;justify-content:space-between;height:36px;padding:0 5px 2px 3px;border:1px solid #8c8c8c;border-radius:7px;font-size:17px;flex:none}
.sel-box .chev{margin-top:2px}
.g-font .body{padding-left:12px}
.fmt{font-size:20px;color:#c9c9c9;font-family:"Liberation Sans",sans-serif;padding-bottom:2px}
.bold{font-weight:700}
.ital{font-style:italic;font-family:"Liberation Serif",serif}
.under{text-decoration:underline;text-underline-offset:3px}
.vsep{flex:none;display:flex;justify-content:center;height:36px}
.vsep::before{content:"";width:1px;background:#777}
.vsep.tall{height:94px;width:1px;background:#777;margin-top:9px}
.vsep.tall::before{display:none}
.alignb{padding-left:11px}
.on{display:flex;align-items:center;justify-content:center;width:36px;height:36px;border:1px solid #909090;border-radius:7px;background:#585858}
.num{flex-direction:column;padding:0 0 0 13px}
.num .sel-box{margin-top:-1px}
.sym{font-size:30px;color:#c9c9c9;font-weight:300}
.listb{flex-direction:column;padding-left:18px;margin-top:-2px}
.txt{gap:6px;white-space:nowrap}
.txt span{padding-bottom:2px}
.txt .chev{margin-left:-1px}
.cw{width:57px}
.cw2{width:64px}
.g-edit .body{padding-left:21px}
.g-edit .col39{width:50px;margin-right:2px}
.disabled{opacity:.42}
.collapse{flex:1;display:flex;justify-content:flex-end;align-items:flex-end;padding:0 14px 5px 0}
.big-ch{stroke-width:1.800}

/* formula bar */
.fbar{display:flex;align-items:stretch;height:34px;margin:12px 12px 11px;flex:none}
.namebox{display:flex;align-items:center;justify-content:space-between;width:151px;padding:0 8px 0 7px;background:#4c4c4c;border:1px solid #8a8a8a;border-radius:5px;color:#0a0a0a;font-size:19px;flex:none}
.fdots{display:flex;flex-direction:column;justify-content:center;gap:4px;width:31px;align-items:center;flex:none}
.fdots i,.sdots i{width:3px;height:3px;background:#e4e4e4;display:block}
.fxbox{display:flex;align-items:center;width:109px;padding-left:10px;background:#4c4c4c;border:1px solid #777;border-radius:5px;flex:none;gap:14px}
.fx{font-family:"Liberation Serif",serif;font-style:italic;font-size:27px;color:#cfcfcf;line-height:30px}
.fbox{flex:1;display:flex;align-items:center;justify-content:space-between;margin-left:7px;padding:0 7px 0 16px;background:#4c4c4c;border:1px solid #8a8a8a;border-radius:5px;font-size:19px}

/* sheet */
.sheet{display:flex;height:803px;flex:none;background:#2e2d2d}
.gridwrap{width:1889px;height:803px;overflow:hidden;flex:none;background:#fff}
.grid{width:1889px;table-layout:fixed;border-collapse:separate;border-spacing:0;font-family:Lato,"Liberation Sans",sans-serif;font-size:21px;letter-spacing:.45px;color:#111}
.c-h{width:43px}.c-a{width:19px}.c-b{width:128px}.c-c{width:608px}.c-d{width:266px}.c-e{width:128px}.c-f{width:258px}.c-g{width:128px}
thead tr{height:31px}
tbody tr{height:31px}
thead th{background:#2e2d2d;color:#ececec;font-weight:400;font-size:20px;letter-spacing:0;border-bottom:2px solid #b5b5b5;border-right:1px solid #8a8a8a;padding:0;line-height:1}
th.corner{border-right:0;padding:0}
th.corner svg{margin:2px 3px 0 auto}
thead th:last-child{border-right:0}
th.hsel{background:#696969;border-bottom:2px solid #217346}
tbody th{background:#2e2d2d;color:#f2f2f2;font-weight:400;font-size:20px;letter-spacing:0;padding:0;border-bottom:1px solid #b5b5b5;line-height:1}
tbody th.rsel{background:#696969;border-right:2px solid #217346}
td{border-right:1px solid #e1e1e1;border-bottom:1px solid #e1e1e1;padding:0 3px 2px;white-space:nowrap;overflow:hidden;line-height:1}
td.x{border-right:1px solid #000;border-bottom:1px solid #000}
td.bb{border-bottom:1px solid #000}
td.br{border-right:1px solid #000}
.gr{background:#d0cece}
.yl{background:#fff2cc}
.hd{font-weight:700;text-align:center;letter-spacing:.6px}
.ctr{text-align:center}
.red{background:#f00}
.dn{background:#00b050}
.ip{background:#ffe699}
.oh{background:#8eaadb}
.lo{background:#c5e0b3}
td.x.cur{position:relative;overflow:visible;border-right-color:#217346;border-bottom-color:#217346;box-shadow:inset 0 0 0 1px #217346,inset 0 0 0 2px #fff}
td.cur::after{content:"";position:absolute;right:-4px;bottom:-4px;width:7px;height:7px;background:#217346;border:1px solid #fff}
.vscroll{width:31px;height:806px;display:flex;flex-direction:column;align-items:center;justify-content:space-between;padding:6px 0;background:#3a3a3a;border-radius:14px;position:relative;z-index:1}
.vthumb{width:11px;height:603px;border-radius:6px;background:#c0c0c0;margin:8px 0 auto}

/* sheet tabs */
.sheetbar{display:flex;align-items:flex-start;height:48px;flex:none;background:#2f2f2d}
.nav-l,.nav-r{fill:none;stroke:#9a9a9a;stroke-width:1.400;margin-top:11px}
.nav-l{margin-left:34px}
.nav-r{margin-left:38px}
.sheettab{width:184px;height:42px;margin-left:74px;padding:0 13px;background:#fff;border-radius:0 0 7px 7px;color:#222;font-family:"Open Sans",sans-serif;font-size:20.300px;font-weight:600;line-height:38px;white-space:nowrap}
.sheettab span{display:block;height:38px;border-bottom:3px solid #107c41;letter-spacing:-.3px}
.tabsep{width:1px;height:34px;margin:2px 0 0 5px;background:#777}
.plus{margin:11px 0 0 62px;fill:none;stroke:#c8c8c8;stroke-width:1.500}
.sdots{display:flex;flex-direction:column;gap:4px;margin:14px 0 0 718px}
.hscroll{display:flex;align-items:center;width:711px;height:26px;margin:10px 0 0 23px;padding:0 9px 0 8px;background:#3f3f3f;border-radius:13px}
.hthumb{width:575px;height:12px;margin:0 auto 0 46px;border-radius:6px;background:#c0c0c0}

/* status */
.status{display:flex;align-items:center;height:33px;flex:none;background:#383838;font-size:15px;color:#f0f0f0}
.ready{width:80px;padding:0 0 2px 12px}
.acc-t{margin-left:6px;width:1366px;padding-bottom:2px;white-space:nowrap}
.views{display:flex;height:33px}
.v-cell{display:flex;align-items:center;justify-content:center;width:60px;height:33px}
.v-on{background:#474747}
.zm{margin-left:7px;width:22px;font-size:20px}
.slider{display:flex;justify-content:center;align-items:center;width:148px;height:3px;background:#c0c0c0}
.slider i{display:block;width:7px;height:18px;background:#c0c0c0}
.zp{width:25px;margin-left:8px;font-size:20px}
.zoom{width:46px;margin-left:6px;font-size:15.500px;white-space:nowrap}

/* taskbar */
.taskbar{display:flex;align-items:center;flex:1;background:radial-gradient(ellipse 480px 130px at 1090px 10px,#eef0a8 0,rgba(238,240,168,.4) 60%,rgba(238,240,168,0) 100%),linear-gradient(90deg,#dcdcdc 0,#e3e3e3 45%,#e6e8e0 70%,#dadada 100%);border-top:2px solid #cfcfcf;color:#1a1a1a}
.weather{display:flex;align-items:center;width:501px;padding-left:33px;flex:none}
.sun-n{fill:#fff;font-size:17px;font-family:"Open Sans",sans-serif}
.w-text{display:flex;flex-direction:column;margin-left:6px;font-size:17px;line-height:24px}
.w-s{color:#5f5f5f}
.pill{display:flex;align-items:center;width:328px;height:35px;margin-left:27px;padding-left:18px;background:#f6f6f6;border:1px solid #cdcdcd;border-bottom:2px solid #c4c4c4;border-radius:18px;font-size:19px;color:#555;overflow:hidden;flex:none}
.pill span{margin-left:14px;width:194px}
.decor{margin-top:7px}
.apps{display:flex;margin-left:4px;flex:none}
.app-c{display:flex;align-items:center;justify-content:center;width:78px;height:56px;position:relative}
.edgeapp::after{content:"";position:absolute;left:34px;bottom:-3px;width:9px;height:5px;border-radius:3px;background:#888}
.xlapp{width:56px;margin:0 11px;background:#f3f3ea;border-radius:5px;box-shadow:0 1px 1px #ccc}
.xlapp::after{content:"";position:absolute;left:16px;bottom:0;width:24px;height:4px;border-radius:2px;background:#0078d4}
.tray{flex:1;display:flex;align-items:center;padding-left:60px}
.tr-caret{fill:none;stroke:#1a1a1a;stroke-width:1.600}
.tr-cloud{margin-left:26px}
.tr-kb{margin-left:28px}
.tr-wifi{margin-left:29px}
.tr-vol{margin-left:12px}
.tr-bat{margin-left:9px}
.clock{display:flex;flex-direction:column;align-items:flex-end;width:100px;margin-top:-4px;font-size:18px;line-height:23px;color:#222;white-space:nowrap}
.notif{display:flex;align-items:center;justify-content:center;width:24px;height:24px;margin-left:15px;border-radius:50%;background:#0078d4;color:#fff;font-size:15px}
```
